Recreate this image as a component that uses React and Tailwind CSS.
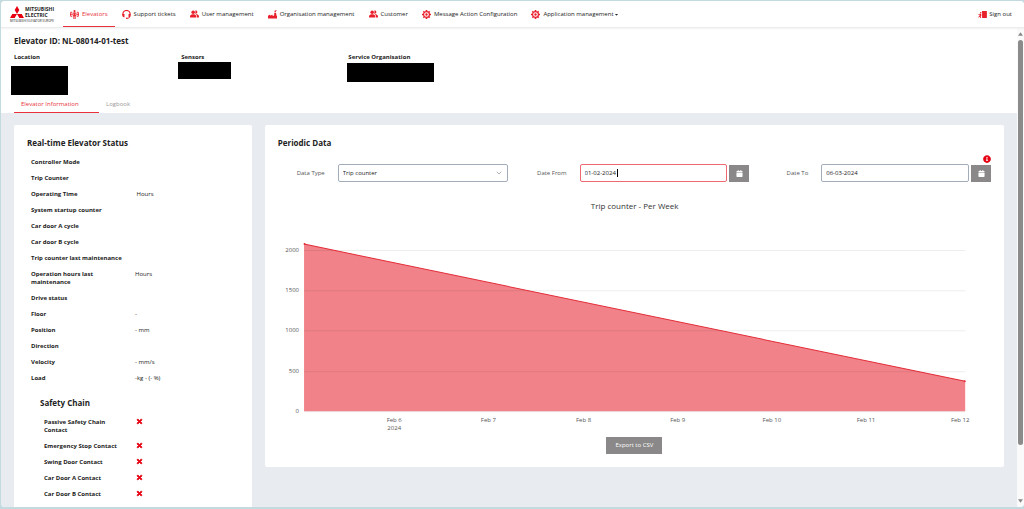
import { useState } from "react";
import { FaCalendar, FaCaretDown, FaInfoCircle, FaTimes } from "react-icons/fa";
import { ChevronDown } from "lucide-react";

const ElevatorIcon = () => (
  <svg viewBox="0 0 20 20" className="size-[9px]" fill="none" stroke="currentColor" strokeWidth="2">
    <circle cx="10" cy="2.4" r="2.4" fill="currentColor" stroke="none" />
    <path d="M7 6.5h6v6H7zM8.5 12v8M11.5 12v8M10 6v8" />
    <path d="M5 5H1.5v9H5M15 5h3.5v9H15M0 9.5h6M14 9.5h6" />
  </svg>
);

const HeadsetIcon = () => (
  <svg viewBox="0 0 20 20" className="size-[9px]" fill="none" stroke="currentColor">
    <path d="M2 12V9a8 8 0 0 1 16 0v3" strokeWidth="2.6" />
    <path d="M1 9h4.5v7H4a3 3 0 0 1-3-3zM19 9h-4.5v7H16a3 3 0 0 0 3-3z" fill="currentColor" stroke="none" />
    <path d="M17.5 14c0 3-2 4.500-6.500 4.500" strokeWidth="2" />
    <circle cx="10.500" cy="18.300" r="1.700" fill="currentColor" stroke="none" />
  </svg>
);

const UsersIcon = () => (
  <svg viewBox="0 0 20 18" className="h-[8px] w-[9px]" fill="currentColor">
    <circle cx="7" cy="5" r="4" />
    <path d="M0 17v-3c0-2.500 3-3.500 5-4.500h4c2 1 5 2 5 4.500v3z" />
    <path d="M11.500 1.300a3.700 3.700 0 1 1 1.300 7.200c-.6 0-.9 0-1.300-.3 1-2 1-5 0-6.900z" />
    <path d="M12.500 9.500h3c2 .8 4.500 2 4.500 4.500v3h-4.600v-3c0-2-1.300-3.400-2.900-4.500z" />
  </svg>
);

const FactoryIcon = () => (
  <svg viewBox="0 0 20 20" className="size-[9px]" fill="currentColor">
    <path d="M0 12.500l5-2.500v2.500l5-2.500v2.500h3.500L14 6h4l.8 6.500H20V19H0z" />
    <circle cx="16" cy="3" r="1.800" />
    <circle cx="18" cy="1.200" r="1.200" />
  </svg>
);

const GearIcon = () => (
  <svg viewBox="0 0 20 20" className="size-[9px]" fill="none" stroke="currentColor">
    <circle cx="10" cy="10" r="6.500" strokeWidth="2.600" />
    <circle cx="10" cy="10" r="2.600" fill="currentColor" stroke="none" />
    <path
      strokeWidth="3.600"
      d="M10 0v3M10 17v3M0 10h3M17 10h3M2.900 2.900l2.100 2.100M15 15l2.100 2.100M2.900 17.100L5 15M15 5l2.100-2.100"
    />
  </svg>
);

const SignOutIcon = () => (
  <svg viewBox="0 0 20 16" className="h-[7px] w-[9px]" fill="currentColor">
    <path d="M9 0h11v16H9z" />
    <circle cx="6" cy="4" r="1.800" />
    <path d="M1 7l5-1 2 3-2 3 1 4H5l-1-3-3 2-1-1 3-3 1-3-3 1z" />
  </svg>
);

const Logo = () => (
  <a href="#" aria-label="Mitsubishi Electric" className="flex w-[46px] shrink-0 flex-col text-[#222]">
    <span className="flex items-center gap-px">
      <svg viewBox="0 0 28 24" className="h-[12px] w-[14px] shrink-0" fill="#e60012">
        <path d="M14 0l4.600 8L14 16 9.400 8zM14 16l-4.600 8H0l4.600-8zM14 16l4.600 8H28l-4.600-8z" />
      </svg>
      <span className="text-[5px] leading-[6px] font-bold">
        MITSUBISHI
        <br />
        ELECTRIC
      </span>
    </span>
    <span className="mt-px text-[3px] leading-[4px] whitespace-nowrap">MITSUBISHI ELEVATOR EUROPE</span>
  </a>
);

const navItems = [
  { label: "Elevators", icon: <ElevatorIcon />, active: true },
  { label: "Support tickets", icon: <HeadsetIcon /> },
  { label: "User management", icon: <UsersIcon /> },
  { label: "Organisation management", icon: <FactoryIcon /> },
  { label: "Customer", icon: <UsersIcon /> },
  { label: "Message Action Configuration", icon: <GearIcon /> },
  { label: "Application management", icon: <GearIcon />, menu: true },
];

const statusRows = [
  ["Controller Mode", ""],
  ["Trip Counter", ""],
  ["Operating Time", "\u00a0Hours"],
  ["System startup counter", ""],
  ["Car door A cycle", ""],
  ["Car door B cycle", ""],
  ["Trip counter last maintenance", ""],
  ["Operation hours last maintenance", "Hours"],
  ["Drive status", ""],
  ["Floor", "-"],
  ["Position", "- mm"],
  ["Direction", ""],
  ["Velocity", "- mm/s"],
  ["Load", "-kg - (- %)"],
];

const safetyRows = [
  "Passive Safety Chain Contact",
  "Emergency Stop Contact",
  "Swing Door Contact",
  "Car Door A Contact",
  "Car Door B Contact",
];

const yTicks = [
  { label: "2000", y: 54 },
  { label: "1500", y: 94 },
  { label: "1000", y: 134 },
  { label: "500", y: 175 },
  { label: "0", y: 215 },
];

const xTicks = [
  { label: "Feb 6", x: 116 },
  { label: "Feb 7", x: 210 },
  { label: "Feb 8", x: 305 },
  { label: "Feb 9", x: 399 },
  { label: "Feb 10", x: 493 },
  { label: "Feb 11", x: 587 },
  { label: "Feb 12", x: 681 },
];

function Header() {
  return (
    <header className="z-10 flex h-[27px] shrink-0 items-stretch border-b border-[#ececec] bg-white pr-3 pl-[9px] shadow-xs">
      <div className="flex items-center pt-px">
        <Logo />
      </div>
      <nav className="ml-[7px] flex items-stretch">
        {navItems.map(({ label, icon, active, menu }) => (
          <a
            key={label}
            href="#"
            className={`flex items-center gap-[3px] border-b px-[7px] pt-px text-[6px] whitespace-nowrap ${
              active ? "border-[#e8313b] text-[#e8313b]" : "border-transparent text-[#222]"
            }`}
          >
            <span className="text-[#e8202b]">{icon}</span>
            <span className="flex items-center">
              {label}
              {menu && <FaCaretDown className="size-[5px]" />}
            </span>
          </a>
        ))}
      </nav>
      <button type="button" className="ml-auto flex items-center gap-[2px] text-[6px] text-[#222]">
        <span className="text-[#e8202b]">
          <SignOutIcon />
        </span>
        Sign out
      </button>
    </header>
  );
}

function ElevatorSummary({ tab, setTab }) {
  return (
    <section className="bg-white pt-[8px] pl-[13px]">
      <h1 className="text-[8px] leading-[10px] font-bold">Elevator ID: NL-08014-01-test</h1>
      <div className="mt-[7px] grid h-[42px] grid-cols-6 items-start text-[6px] leading-[8px] font-bold">
        <div>
          Location
          <div className="mt-[5px] -ml-[3px] h-[29px] w-[57px] bg-black" />
        </div>
        <div>
          Sensors
          <div className="mt-px -ml-[3px] h-[17px] w-[53px] bg-black" />
        </div>
        <div>
          Service Organisation
          <div className="mt-[2px] -ml-px h-[19px] w-[87px] bg-black" />
        </div>
      </div>
      <div role="tablist" className="flex text-[6px]">
        {["Elevator Information", "Logbook"].map((name) => (
          <button
            key={name}
            type="button"
            role="tab"
            aria-selected={tab === name}
            onClick={() => setTab(name)}
            className={`h-[18px] min-w-[85px] border-b px-[7px] pt-px text-left ${
              tab === name ? "border-[#e8313b] text-[#e8313b]" : "border-transparent text-[#999]"
            }`}
          >
            {name}
          </button>
        ))}
      </div>
    </section>
  );
}

function StatusCard() {
  return (
    <section className="rounded-xs bg-white p-[13px] text-[6px] leading-[8px]">
      <h2 className="text-[8px] leading-[10px] font-bold">Real-time Elevator Status</h2>
      <dl className="mt-[10px] ml-1 flex flex-col gap-2">
        {statusRows.map(([label, value]) => (
          <div key={label} className="flex">
            <dt className="w-[104px] shrink-0 pr-2 font-bold">{label}</dt>
            <dd>{value}</dd>
          </div>
        ))}
      </dl>
      <h3 className="mt-4 ml-[13px] text-[8px] leading-[10px] font-bold">Safety Chain</h3>
      <dl className="mt-[10px] ml-[17px] flex flex-col gap-2">
        {safetyRows.map((label) => (
          <div key={label} className="flex">
            <dt className="w-[92px] shrink-0 pr-3 font-bold">{label}</dt>
            <dd className="text-[#e60012]">
              <FaTimes className="size-[7px]" strokeWidth="60" stroke="currentColor" aria-label="Open" />
            </dd>
          </div>
        ))}
      </dl>
    </section>
  );
}

function DateField({ id, label, value, onChange, active }) {
  return (
    <div className="flex items-center">
      <label htmlFor={id} className="mr-[13px] w-[47px] shrink-0 text-right text-[#555]">
        {label}
      </label>
      <div className="relative min-w-0 flex-1">
        <input
          id={id}
          value={value}
          onChange={(e) => onChange(e.target.value)}
          className={`h-[18px] w-full rounded-xs border px-1 text-[#222] outline-none ${
            active ? "border-[#ee6a72]" : "border-[#a3adb9]"
          }`}
        />
        {active && <span className="absolute top-[5px] left-[37px] h-2 w-px bg-black" />}
      </div>
      <button
        type="button"
        aria-label={`Pick ${label}`}
        className="ml-[2px] flex h-[17px] w-5 shrink-0 items-center justify-center bg-[#8a8889] text-white"
      >
        <FaCalendar className="size-[7px]" />
      </button>
    </div>
  );
}

function TripChart() {
  return (
    <svg viewBox="0 0 712 238" className="w-full" role="img" aria-label="Trip counter - Per Week">
      <text x="356" y="13" textAnchor="middle" fontSize="8" fill="#333">
        Trip counter - Per Week
      </text>
      {yTicks.map(({ label, y }) => (
        <text key={label} x="21" y={y + 2} textAnchor="end" fontSize="6" fill="#555">
          {label}
        </text>
      ))}
      <path d="M26 48L686 185V215H26z" fill="#f18289" />
      {yTicks.map(({ label, y }) => (
        <path key={label} d={`M26 ${y + 0.5}H686`} stroke="#000" strokeOpacity="0.07" />
      ))}
      <path d="M26 48L686 185" stroke="#e32d38" fill="none" />
      <circle cx="26.500" cy="48" r="1" fill="#e32d38" />
      <circle cx="685.500" cy="185" r="1" fill="#e32d38" />
      {xTicks.map(({ label, x }) => (
        <text key={label} x={x} y="226" textAnchor="middle" fontSize="6" fill="#555">
          {label}
        </text>
      ))}
      <text x="116" y="234" textAnchor="middle" fontSize="6" fill="#555">
        2024
      </text>
    </svg>
  );
}

function PeriodicCard() {
  const [dataType, setDataType] = useState("Trip counter");
  const [from, setFrom] = useState("01-02-2024");
  const [to, setTo] = useState("06-03-2024");

  return (
    <section className="col-span-3 self-start rounded-xs bg-white p-[13px] text-[6px]">
      <h2 className="text-[8px] leading-[10px] font-bold">Periodic Data</h2>
      <div className="mt-[7px] flex justify-end text-[#e60012]">
        <FaInfoCircle className="size-[8px]" aria-label="Info" />
      </div>
      <div className="mt-px grid grid-cols-3 gap-3">
        <div className="flex items-center">
          <label htmlFor="data-type" className="mr-[13px] w-[47px] shrink-0 text-right text-[#555]">
            Data Type
          </label>
          <div className="relative min-w-0 flex-1">
            <select
              id="data-type"
              value={dataType}
              onChange={(e) => setDataType(e.target.value)}
              className="h-[18px] w-full appearance-none rounded-xs border border-[#a3adb9] bg-white px-1 text-[#222]"
            >
              <option>Trip counter</option>
              <option>Operating time</option>
            </select>
            <ChevronDown className="pointer-events-none absolute top-[5px] right-[5px] size-2 text-[#888]" />
          </div>
        </div>
        <DateField id="date-from" label="Date From" value={from} onChange={setFrom} active />
        <DateField id="date-to" label="Date To" value={to} onChange={setTo} />
      </div>
      <div className="mt-[14px]">
        <TripChart />
      </div>
      <div className="mt-[3px] flex justify-center">
        <button type="button" className="h-[17px] bg-[#8a8889] px-[9px] text-white">
          Export to CSV
        </button>
      </div>
    </section>
  );
}

function Scrollbar() {
  return (
    <div className="flex w-[7px] shrink-0 flex-col items-center bg-[#fafafa] py-[4px] text-[#888]">
      <svg viewBox="0 0 6 4" className="h-1 w-[5px]" fill="currentColor">
        <path d="M3 0l3 4H0z" />
      </svg>
      <div className="my-1 flex w-full flex-1 flex-col px-px">
        <div className="h-[89%] rounded-full bg-[#8b8b8b]" />
      </div>
      <svg viewBox="0 0 6 4" className="h-1 w-[5px]" fill="currentColor">
        <path d="M3 4l3-4H0z" />
      </svg>
    </div>
  );
}

export default function App() {
  const [tab, setTab] = useState("Elevator Information");

  return (
    <div className="h-screen bg-[#c3dade] pt-px pb-[2px] pl-px font-['Open_Sans','Noto_Sans',sans-serif] text-[#222]">
      <div className="flex h-full flex-col overflow-hidden rounded-sm bg-white">
        <Header />
        <div className="flex min-h-0 flex-1">
          <div className="min-w-0 flex-1 overflow-hidden bg-[#e8ebf0]">
            <ElevatorSummary tab={tab} setTab={setTab} />
            <main className="grid grid-cols-4 gap-[13px] px-[13px] py-3">
              <StatusCard />
              <PeriodicCard />
            </main>
          </div>
          <Scrollbar />
        </div>
      </div>
    </div>
  );
}
